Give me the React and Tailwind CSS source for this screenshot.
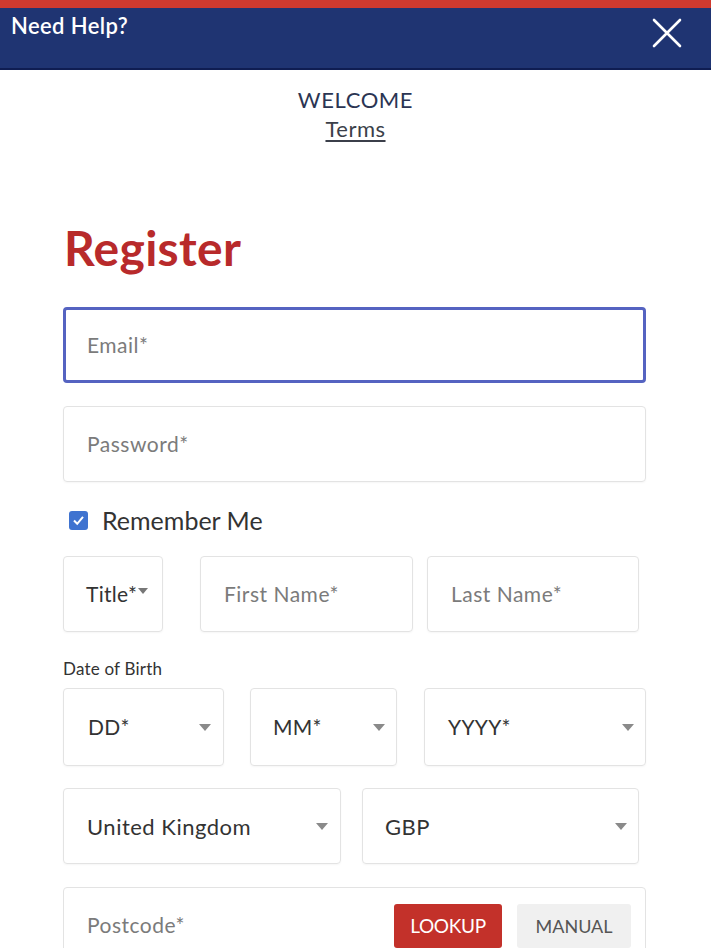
import React from "react";

const font = { fontFamily: "Lato, 'Noto Sans', sans-serif" };

function Arrow() {
  return (
    <svg width="12" height="7" viewBox="0 0 12 7" className="shrink-0">
      <path d="M0 0 L12 0 L6 7 Z" fill="#8a8a8a" />
    </svg>
  );
}

function Box({ className = "", children }) {
  return (
    <div
      className={
        "h-[76px] rounded-[4px] border border-[#e3e3e3] shadow-[0_1px_2px_rgba(0,0,0,0.04)] flex items-center " +
        className
      }
    >
      {children}
    </div>
  );
}

export default function App() {
  return (
    <div className="w-[711px] h-[948px] bg-white overflow-hidden" style={font}>
      <div className="h-[8px] bg-[#cf3a2f]" />
      <div className="h-[62px] bg-[#1f3472] border-b-2 border-[#0f1d52] flex items-start justify-between pl-[11px] pr-[29px]">
        <span className="text-white text-[22px] font-semibold mt-[3px] leading-[30px] tracking-[0.4px]">
          Need Help?
        </span>
        <svg width="30" height="30" viewBox="0 0 30 30" className="mt-[10px]">
          <path d="M2 2 L28 28 M28 2 L2 28" stroke="white" strokeWidth="2.6" strokeLinecap="round" />
        </svg>
      </div>

      <div className="flex flex-col items-center mt-[16px]">
        <span className="text-[22px] text-[#2b3553] leading-[28px] tracking-[0.6px]">WELCOME</span>
        <span className="text-[22px] text-[#3b3f4a] leading-[30px] tracking-[0.5px] underline underline-offset-[3px]">
          Terms
        </span>
      </div>

      <div className="pl-[63px] pr-[65px]">
        <h1 className="mt-[79px] text-[48px] font-bold text-[#b82a2b] leading-[50px] tracking-[0.3px] ml-[1px]">
          Register
        </h1>

        <div className="mt-[34px] h-[76px] rounded-[4px] border-[3px] border-[#5563c1] flex items-center pl-[21px]">
          <span className="text-[21px] tracking-[0.5px] text-[#7b7b7b]">Email*</span>
        </div>

        <Box className="mt-[23px] pl-[23px]">
          <span className="text-[21px] tracking-[0.5px] text-[#7b7b7b]">Password*</span>
        </Box>

        <div className="mt-[26px] h-[24px] flex items-center ml-[6px]">
          <div className="w-[19px] h-[19px] rounded-[3px] bg-[#3f73d0] flex items-center justify-center">
            <svg width="13" height="13" viewBox="0 0 13 13">
              <path d="M2 6.5 L5.2 9.8 L11 2.8" stroke="white" strokeWidth="2" fill="none" />
            </svg>
          </div>
          <span className="ml-[14px] text-[25px] leading-[24px] text-[#333333]">Remember Me</span>
        </div>

        <div className="mt-[24px] flex w-[576px]">
          <Box className="w-[100px] pl-[22px]">
            <span className="text-[21px] tracking-[0.3px] text-[#333]">Title*</span>
            <svg width="10" height="6" viewBox="0 0 10 6" className="ml-[1px] -mt-[6px]">
              <path d="M0 0 L10 0 L5 6 Z" fill="#777" />
            </svg>
          </Box>
          <Box className="w-[213px] ml-[37px] pl-[23px]">
            <span className="text-[21px] tracking-[0.5px] text-[#7b7b7b]">First Name*</span>
          </Box>
          <Box className="w-[212px] ml-[14px] pl-[23px]">
            <span className="text-[21px] tracking-[0.5px] text-[#7b7b7b]">Last Name*</span>
          </Box>
        </div>

        <div className="mt-[27px] text-[17px] tracking-[0.2px] text-[#333] leading-[20px]">Date of Birth</div>

        <div className="mt-[9px] flex w-[583px]">
          <Box className="w-[161px] h-[78px] pl-[24px] pr-[12px] justify-between">
            <span className="text-[21px] tracking-[0.3px] text-[#333]">DD*</span>
            <Arrow />
          </Box>
          <Box className="w-[147px] h-[78px] ml-[26px] pl-[22px] pr-[11px] justify-between">
            <span className="text-[21px] tracking-[0.3px] text-[#333]">MM*</span>
            <Arrow />
          </Box>
          <Box className="w-[222px] h-[78px] ml-[27px] pl-[23px] pr-[11px] justify-between">
            <span className="text-[21px] tracking-[0.3px] text-[#333]">YYYY*</span>
            <Arrow />
          </Box>
        </div>

        <div className="mt-[22px] flex w-[576px]">
          <Box className="w-[278px] pl-[23px] pr-[12px] justify-between">
            <span className="text-[22px] tracking-[0.5px] text-[#333]">United Kingdom</span>
            <Arrow />
          </Box>
          <Box className="w-[277px] ml-[21px] pl-[22px] pr-[11px] justify-between">
            <span className="text-[22px] tracking-[0.5px] text-[#333]">GBP</span>
            <Arrow />
          </Box>
        </div>

        <div className="mt-[23px] h-[80px] rounded-[4px] border border-[#e3e3e3] flex items-start pl-[23px] pr-[14px] w-[583px]">
          <span className="mt-[23px] text-[21px] tracking-[0.5px] leading-[28px] text-[#7b7b7b] flex-1">Postcode*</span>
          <div className="mt-[16px] w-[108px] h-[44px] rounded-[3px] bg-[#c3312a] flex items-center justify-center">
            <span className="text-white text-[19px] tracking-[-0.3px]">LOOKUP</span>
          </div>
          <div className="mt-[16px] ml-[15px] w-[114px] h-[44px] rounded-[3px] bg-[#f0f0f0] flex items-center justify-center">
            <span className="text-[#555] text-[18px]">MANUAL</span>
          </div>
        </div>
      </div>
    </div>
  );
}
